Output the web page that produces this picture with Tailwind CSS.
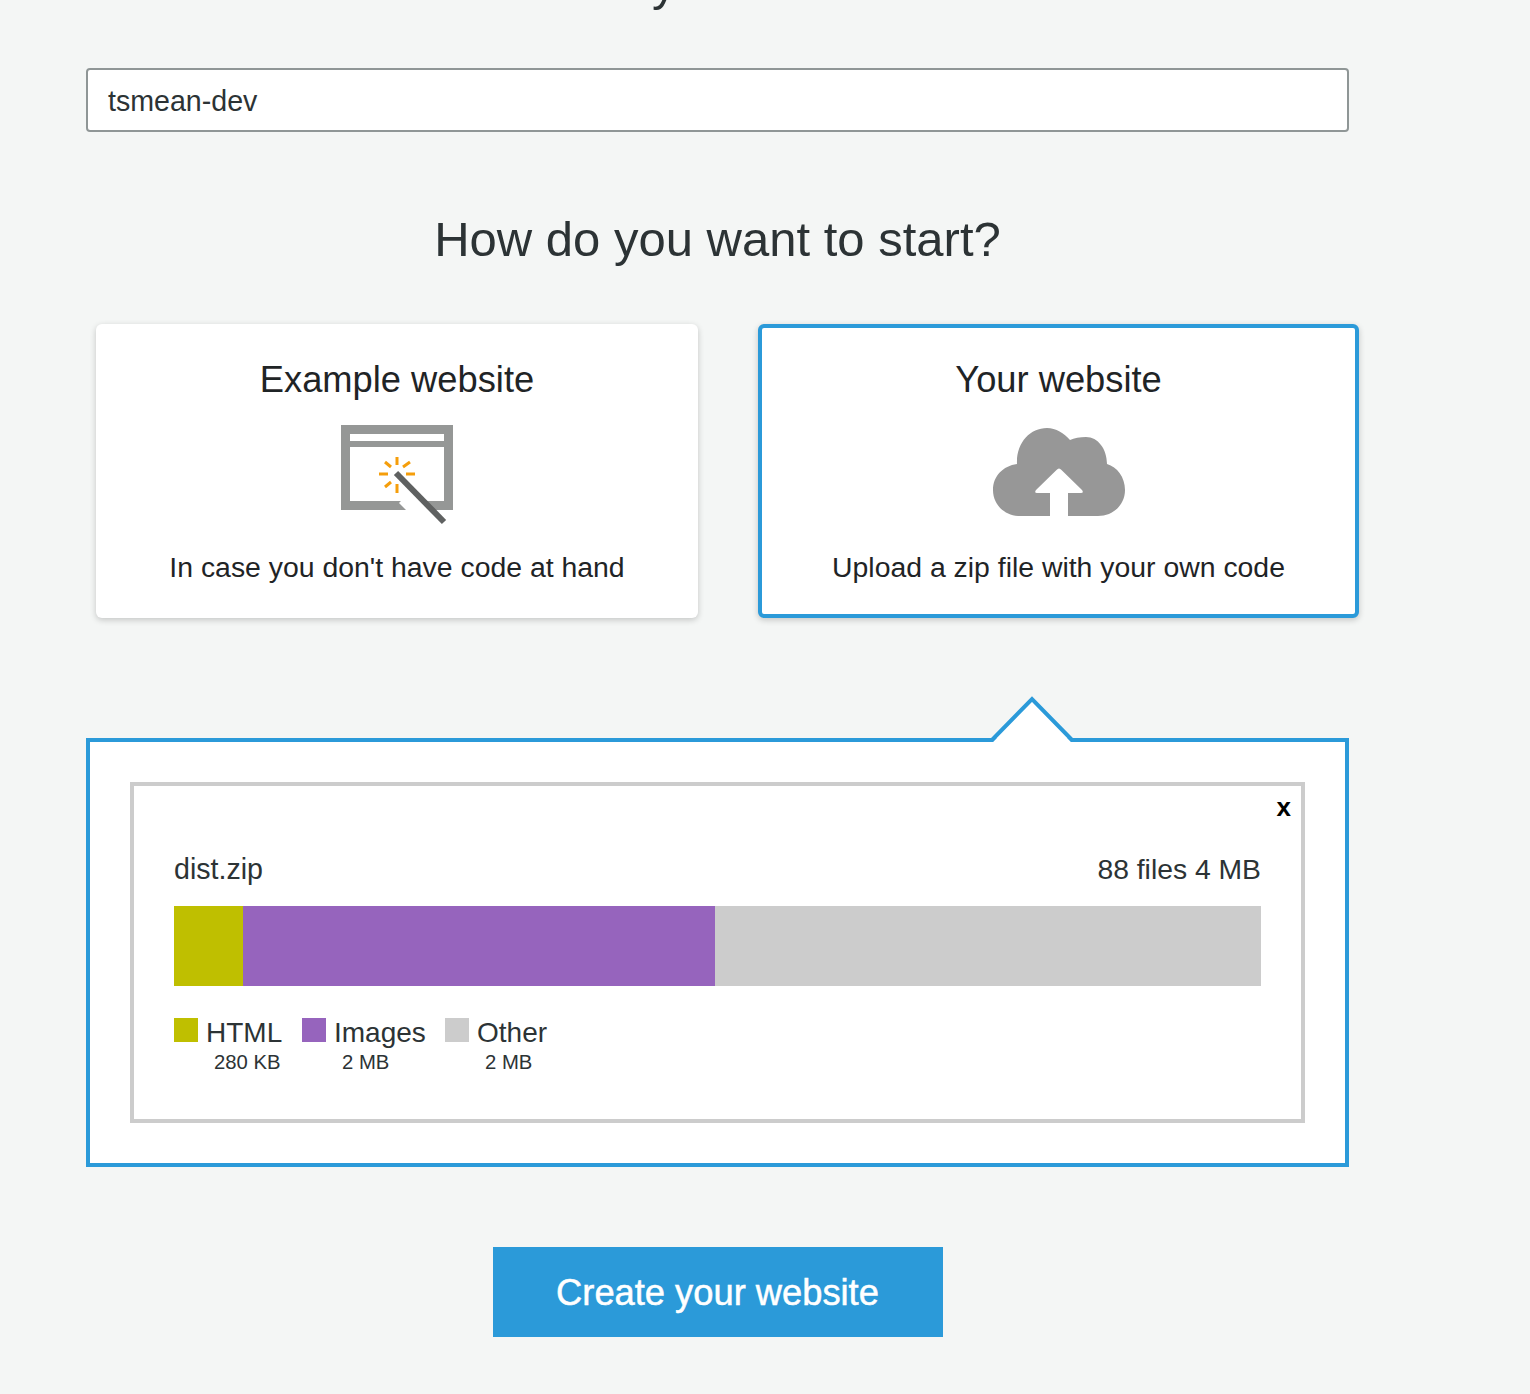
<!DOCTYPE html>
<html lang="en">
<head>
  <meta charset="UTF-8" />
  <title>Create your website</title>
  <script src="https://cdn.jsdelivr.net/npm/@tailwindcss/browser@4"></script>
</head>
<body class="bg-[#f4f6f5] text-[#2c3335] font-['Liberation_Sans',Arial,sans-serif] h-[1394px] overflow-hidden">
  <main class="w-[1263px] ml-[86px]">

    <!-- Site name -->
    <h2 class="text-[49px] leading-[56px] text-center -mt-[45px] h-[56px]">Name your website</h2>
    <div class="mt-[57px] h-[64px] bg-white border-2 border-[#8f9696] rounded-[4px] flex items-center px-5 pt-[2px] text-[28.6px]">tsmean-dev</div>

    <h2 class="text-[49px] leading-[56px] text-center mt-[79px]">How do you want to start?</h2>

    <!-- Start options -->
    <div class="flex gap-[60px] ml-[10px] mt-[57px] w-[1263px]">
      <div class="w-[602px] h-[294px] bg-white rounded-[6px] shadow-[0_2px_6px_rgba(0,0,0,0.2)] flex flex-col items-center text-[#1f2426]">
        <div class="text-[36.3px] leading-[42px] mt-[35px]">Example website</div>
        <svg class="mt-[22px]" width="116" height="102" viewBox="0 0 116 102">
          <path fill="#959796" fill-rule="evenodd" d="M2 2H114V87H2ZM11 11V18H105V11ZM11 24V78H105V24Z" />
          <path d="M66 74L96 104" stroke="#fff" stroke-width="17" />
          <path d="M57 50L105 99" stroke="#5f6161" stroke-width="6" />
          <path d="M58 34V42M58 61V70M40 51H49M67 51H76M46 39L52 44M71 39L64 44M46 64L52 59" stroke="#f59e0b" stroke-width="3" fill="none" />
        </svg>
        <div class="text-[28.4px] leading-[34px] mt-[25px]">In case you don't have code at hand</div>
      </div>
      <div class="w-[601px] h-[294px] bg-white rounded-[6px] border-4 border-[#2b9ad9] shadow-[0_2px_6px_rgba(0,0,0,0.2)] flex flex-col items-center text-[#1f2426]">
        <div class="text-[36.3px] leading-[42px] mt-[31px]">Your website</div>
        <svg class="mt-[27px]" width="134" height="90" viewBox="0 0 134 90">
          <path fill="#979797" d="M1 62C1 48 11 38 25 36C24 15 38 0 55 0C64 0 72 5 78 12C82 10 88 9 94 9C106 9 115 21 115 36C125 39 133 49 133 62C133 77 121 88 106 88H28C13 88 1 77 1 62Z" />
          <path fill="#fff" d="M64.5 42Q67 39 69.5 42L90 62Q92 65 89 65H76V90H58V65H45Q42 65 44 62Z" />
        </svg>
        <div class="text-[28.4px] leading-[34px] mt-[32px]">Upload a zip file with your own code</div>
      </div>
    </div>

    <!-- Upload panel -->
    <section class="relative mt-[120px] h-[429px] bg-white border-4 border-[#2b9ad9] p-10">
      <svg class="absolute left-[899px] -top-[47px]" width="90" height="51" viewBox="0 0 90 51">
        <path d="M4 47L43 6L82 47Z" fill="#fff" />
        <path d="M0 45H3L43 4L83 45H86" fill="none" stroke="#2b9ad9" stroke-width="4" />
      </svg>
      <div class="relative h-[341px] border-4 border-[#cccccc] px-10">
        <span class="absolute right-[10px] top-[6px] text-[26px] leading-[30px] font-bold text-black">x</span>
        <div class="flex justify-between text-[28.6px] leading-[34px] pt-[66px] h-[100px]">
          <span>dist.zip</span>
          <span class="text-[28.3px]">88 files 4 MB</span>
        </div>
        <div class="flex h-20 mt-[20px]">
          <div class="w-[69px] bg-[#bfbf00]"></div>
          <div class="w-[472px] bg-[#9664bd]"></div>
          <div class="flex-1 bg-[#cccccc]"></div>
        </div>
        <div class="flex mt-8">
          <div class="w-[128px]">
            <div class="flex items-start gap-2 text-[28px] leading-[28px]"><i class="block w-6 h-6 bg-[#bfbf00]"></i><span class="pt-[1px]">HTML</span></div>
            <div class="text-[20.3px] leading-6 ml-[40px] mt-[3px]">280 KB</div>
          </div>
          <div class="w-[143px]">
            <div class="flex items-start gap-2 text-[28px] leading-[28px]"><i class="block w-6 h-6 bg-[#9664bd]"></i><span class="pt-[1px]">Images</span></div>
            <div class="text-[20.3px] leading-6 ml-[40px] mt-[3px]">2 MB</div>
          </div>
          <div>
            <div class="flex items-start gap-2 text-[28px] leading-[28px]"><i class="block w-6 h-6 bg-[#cccccc]"></i><span class="pt-[1px]">Other</span></div>
            <div class="text-[20.3px] leading-6 ml-[40px] mt-[3px]">2 MB</div>
          </div>
        </div>
      </div>
    </section>

    <div class="flex justify-center mt-[80px]">
      <button class="w-[450px] h-[90px] bg-[#2b9ad9] text-white text-[36.3px] pt-[2px] [-webkit-text-stroke:0.5px_white]">Create your website</button>
    </div>
  </main>
</body>
</html>
